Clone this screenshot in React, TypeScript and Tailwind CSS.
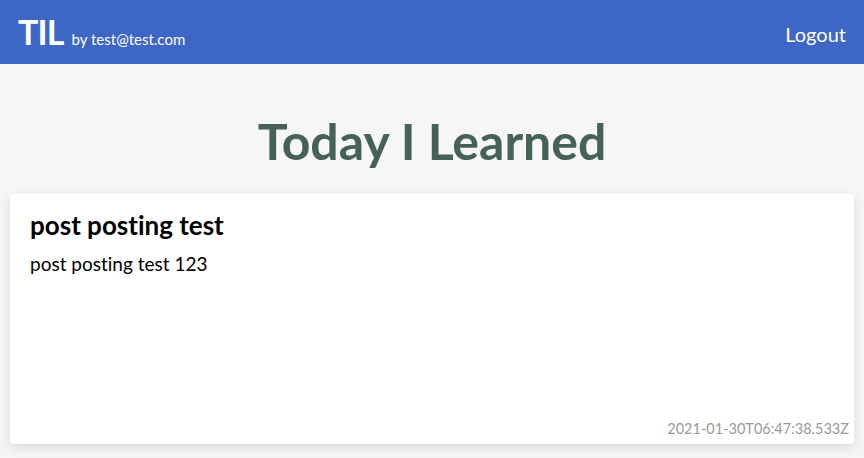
export default function App() {
  return (
    <div className="min-h-[458px] bg-[#f6f6f9] [font-variant-ligatures:none]" style={{ fontFamily: "'Source Sans Pro', Lato, 'Noto Sans', sans-serif" }}>
      <header className="flex h-16 items-center justify-between bg-[#3e66c4] px-[18px] text-white">
        <div className="flex items-baseline gap-[8px] pt-[2px]">
          <span className="text-[34px] font-bold leading-none tracking-tight">TIL</span>
          <span className="text-[15px]">by test@test.com</span>
        </div>
        <button className="pt-[4px] text-[20px]">Logout</button>
      </header>
      <h1 className="pt-[45px] pb-[21px] text-center text-[50px] font-bold leading-[64px] text-[#466255]">
        Today I Learned
      </h1>
      <div className="mx-[10px] flex h-[250px] flex-col rounded-[3px] bg-white px-5 pt-[15px] pb-[4px] shadow-[0_4px_12px_rgba(0,0,0,0.12)]" style={{ fontFamily: "Lato, sans-serif" }}>
        <h2 className="text-[26px] font-bold leading-8 text-black">post posting test</h2>
        <p className="mt-[11px] text-[19px] leading-6 text-black">post posting test 123</p>
        <div className="mt-auto -mr-[15px] text-right text-[14.5px] text-[#999]">2021-01-30T06:47:38.533Z</div>
      </div>
    </div>
  );
}
